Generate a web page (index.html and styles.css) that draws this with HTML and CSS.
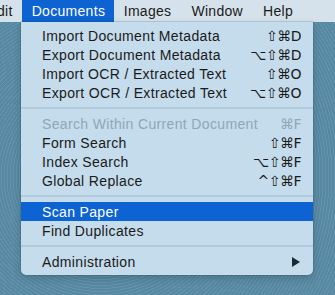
FILE: index.html
```html
<!DOCTYPE html>
<html>
<head>
<meta charset="utf-8">
<link rel="stylesheet" href="styles.css">
</head>
<body>
<div class="desktop">
  <div class="menubar">
    <span class="mb-item mb-first">dit</span>
    <span class="mb-item mb-active">Documents</span>
    <span class="mb-item">Images</span>
    <span class="mb-item">Window</span>
    <span class="mb-item">Help</span>
  </div>
  <div class="menu">
    <div class="row"><span class="label">Import Document Metadata</span><span class="key">⇧⌘D</span></div>
    <div class="row"><span class="label">Export Document Metadata</span><span class="key">⌥⇧⌘D</span></div>
    <div class="row"><span class="label">Import OCR / Extracted Text</span><span class="key">⇧⌘O</span></div>
    <div class="row"><span class="label">Export OCR / Extracted Text</span><span class="key">⌥⇧⌘O</span></div>
    <div class="sep"></div>
    <div class="row disabled"><span class="label">Search Within Current Document</span><span class="key">⌘F</span></div>
    <div class="row"><span class="label">Form Search</span><span class="key">⇧⌘F</span></div>
    <div class="row"><span class="label">Index Search</span><span class="key">⌥⇧⌘F</span></div>
    <div class="row"><span class="label">Global Replace</span><span class="key">^⇧⌘F</span></div>
    <div class="sep"></div>
    <div class="row selected"><span class="label">Scan Paper</span></div>
    <div class="row"><span class="label">Find Duplicates</span></div>
    <div class="sep"></div>
    <div class="row"><span class="label">Administration</span><span class="arrow"></span></div>
  </div>
</div>
</body>
</html>
```
FILE: styles.css
```css
html, body {
  margin: 0;
  padding: 0;
}
body {
  width: 335px;
  height: 295px;
  overflow: hidden;
  font-family: "Liberation Sans", Arial, sans-serif;
}
.desktop {
  position: relative;
  width: 335px;
  height: 295px;
  background-color: #5b8ea8;
  background-image:
    repeating-radial-gradient(circle at 30% 60%, rgba(255,255,255,0.05) 0 1px, rgba(0,0,0,0.04) 1px 3px);
}
.menubar {
  height: 22px;
  display: flex;
  align-items: stretch;
  background: #d6e2eb;
  font-size: 14px;
  letter-spacing: 0.3px;
  color: #1a1a1a;
}
.mb-item {
  display: flex;
  align-items: center;
  padding: 0 10px;
}
.mb-first {
  padding: 0 9px 0 0;
  margin-left: -3px;
}
.mb-active {
  background: #0c63d1;
  color: #fff;
  padding: 0 8px 0 10px;
  width: 74px;
}
.menu {
  position: absolute;
  left: 21px;
  top: 22px;
  width: 292px;
  padding: 4px 0 4px;
  background: #c5dcec;
  border-radius: 0 0 5px 5px;
  box-shadow: 0 0 0 0.5px rgba(40,70,90,0.35), 0 3px 8px rgba(0,0,0,0.18);
  font-size: 14px;
  color: #1a1a1a;
  box-sizing: border-box;
}
.label {
  letter-spacing: 0.35px;
}
.row {
  height: 19px;
  display: flex;
  align-items: center;
  justify-content: space-between;
  padding: 0 12px 0 21px;
}
.row.disabled {
  color: #8fa7b8;
}
.row.selected {
  background: #0c63d1;
  color: #fff;
}
.key {
  font-family: "DejaVu Sans", sans-serif;
  font-size: 14px;
  letter-spacing: -0.5px;
}
.sep {
  height: 2px;
  margin: 5px 0;
  background: #b2cadb;
}
.arrow {
  width: 0;
  height: 0;
  border-top: 5px solid transparent;
  border-bottom: 5px solid transparent;
  border-left: 8px solid #1a2a38;
  margin-right: 1px;
}
```
